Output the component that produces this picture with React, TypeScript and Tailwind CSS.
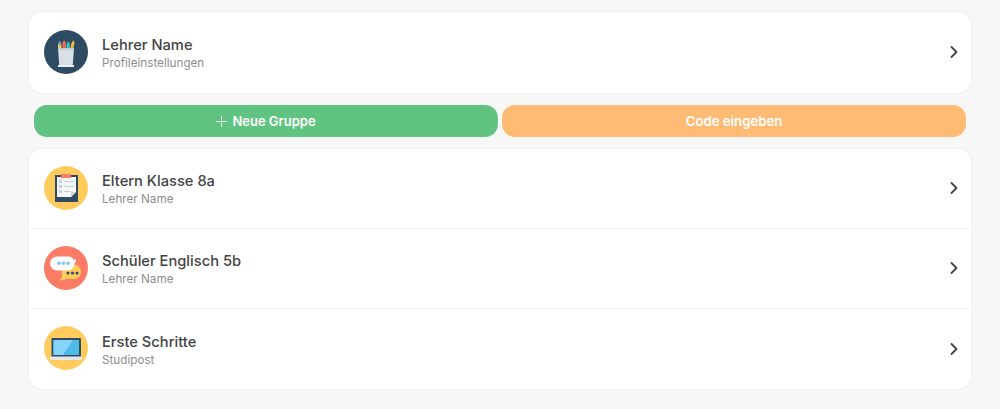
import { ChevronRight } from "lucide-react";
import type { ReactNode } from "react";

function PencilsIcon() {
  return (
    <svg viewBox="0 0 44 44" className="h-11 w-11">
      <circle cx="22" cy="22" r="22" fill="#2f4a63" />
      <path d="M14 20v-6l1.700-3 1.700 3v6z" fill="#f2c94c" />
      <path d="M14 15l1.700-4 1.700 4z" fill="#4aa8e0" />
      <path d="M18.500 20v-7l1.700-3 1.700 3v7z" fill="#ef6b57" />
      <path d="M22.500 20v-6l1.700-3 1.700 3v6z" fill="#35c4b5" />
      <path d="M26 20l1.500-7 2-3 1 3.400-1.600 6.600z" fill="#f5b73c" />
      <path d="M14 18h16l-1.300 18h-13.400z" fill="#d9dfe6" />
      <rect x="14" y="18" width="16" height="2" fill="#c3ccd6" />
      <rect x="14" y="35" width="16" height="2" fill="#eef1f4" />
    </svg>
  );
}

function ClipboardIcon() {
  return (
    <svg viewBox="0 0 44 44" className="h-11 w-11">
      <circle cx="22" cy="22" r="22" fill="#fecb5c" />
      <rect x="11" y="9" width="23" height="27" fill="#2f4a63" />
      <path d="M13 11h19v15l-5 5H13z" fill="#f4f6f8" />
      <path d="M27 31v-5h5z" fill="#cdd5dc" />
      <rect x="17" y="8" width="10" height="4" fill="#fb7c66" />
      <rect x="15" y="14" width="3" height="3" fill="#c6d0d9" />
      <rect x="20" y="15" width="10" height="1" fill="#c6d0d9" />
      <rect x="15" y="19" width="3" height="3" fill="#c6d0d9" />
      <rect x="20" y="20" width="10" height="1" fill="#c6d0d9" />
      <rect x="15" y="24" width="3" height="3" fill="#c6d0d9" />
      <rect x="20" y="25" width="7" height="1" fill="#c6d0d9" />
    </svg>
  );
}

function ChatIcon() {
  return (
    <svg viewBox="0 0 44 44" className="h-11 w-11">
      <circle cx="22" cy="22" r="22" fill="#fb7c66" />
      <path d="M22 18.500h9a7 7 0 0 1 6 7.500 7 7 0 0 1-6 7h-9c-2 1-5 1.500-7 1 2-1 3-2.500 3-5-1-3 1-8.500 4-10.500z" fill="#fecb5c" />
      <path d="M13 10.500h11c3 0 5 1.500 6 3.500l2-1c0 2-.5 3.500-1.500 4.500-.5 4-3 7-7 7H13a7 7 0 0 1 0-14z" fill="#fdfdfd" />
      <circle cx="15" cy="17.300" r="1.800" fill="#7cc8f2" />
      <circle cx="19.500" cy="17.300" r="1.800" fill="#7cc8f2" />
      <circle cx="24" cy="17.300" r="1.800" fill="#7cc8f2" />
      <circle cx="24" cy="27" r="1.600" fill="#2f4a63" />
      <circle cx="28.500" cy="27" r="1.600" fill="#2f4a63" />
      <circle cx="33" cy="27" r="1.600" fill="#2f4a63" />
    </svg>
  );
}

function LaptopIcon() {
  return (
    <svg viewBox="0 0 44 44" className="h-11 w-11">
      <circle cx="22" cy="22" r="22" fill="#fecb5c" />
      <rect x="7.500" y="12" width="29.500" height="19" rx="1" fill="#2f4a63" />
      <rect x="9.500" y="14" width="25.500" height="15" fill="#4fb9e8" />
      <path d="M9.500 14h19.500l-10 15H9.500z" fill="#84d4fb" />
      <path d="M6 30.500h32v2c0 .8-.7 1.500-1.500 1.500h-29c-.8 0-1.500-.7-1.500-1.500z" fill="#e4e8ec" />
    </svg>
  );
}

function Row({ icon, title, subtitle, height = "h-20" }: { icon: ReactNode; title: string; subtitle: string; height?: string }) {
  return (
    <div className={`flex ${height} items-center pl-[15px] pr-[7px]`}>
      <div className="mb-[2px]">{icon}</div>
      <div className="ml-[14px] mt-[1px] flex-1">
        <div className="text-[14.7px] leading-[20px] font-medium text-[#444444]">{title}</div>
        <div className="text-[11.7px] leading-[16px] text-[#8e8e8e]">{subtitle}</div>
      </div>
      <ChevronRight size={20} strokeWidth={2.200} className="mb-[1px] text-[#444444]" />
    </div>
  );
}

export default function App() {
  return (
    <div className="h-[409px] bg-[#f7f7f8] px-[29px] pt-3 font-['Inter',sans-serif]">
      <div className="rounded-[14px] bg-white shadow-[0_0_3px_rgba(0,0,0,0.06)]">
        <Row icon={<PencilsIcon />} title="Lehrer Name" subtitle="Profileinstellungen" height="h-[81px]" />
      </div>
      <div className="my-3 flex gap-1 px-[5px]">
        <button className="flex h-8 flex-1 items-center justify-center gap-[5px] rounded-[13px] bg-[#60c381] pt-px text-[13px] font-semibold text-white">
          <svg viewBox="0 0 11 11" className="h-[11px] w-[11px]" stroke="currentColor" strokeWidth="0.8">
            <path d="M5.500 0v11M0 5.500h11" />
          </svg>
          Neue Gruppe
        </button>
        <button className="h-8 flex-1 rounded-[13px] bg-[#ffbb74] pt-px text-[13.2px] font-semibold text-white">
          Code eingeben
        </button>
      </div>
      <div className="rounded-[14px] bg-white shadow-[0_0_3px_rgba(0,0,0,0.06)]">
        <Row icon={<ClipboardIcon />} title="Eltern Klasse 8a" subtitle="Lehrer Name" height="h-[79px]" />
        <div className="border-t border-[#f3f3f4]">
          <Row icon={<ChatIcon />} title="Schüler Englisch 5b" subtitle="Lehrer Name" height="h-[79px]" />
        </div>
        <div className="border-t border-[#f3f3f4]">
          <Row icon={<LaptopIcon />} title="Erste Schritte" subtitle="Studipost" />
        </div>
      </div>
    </div>
  );
}
